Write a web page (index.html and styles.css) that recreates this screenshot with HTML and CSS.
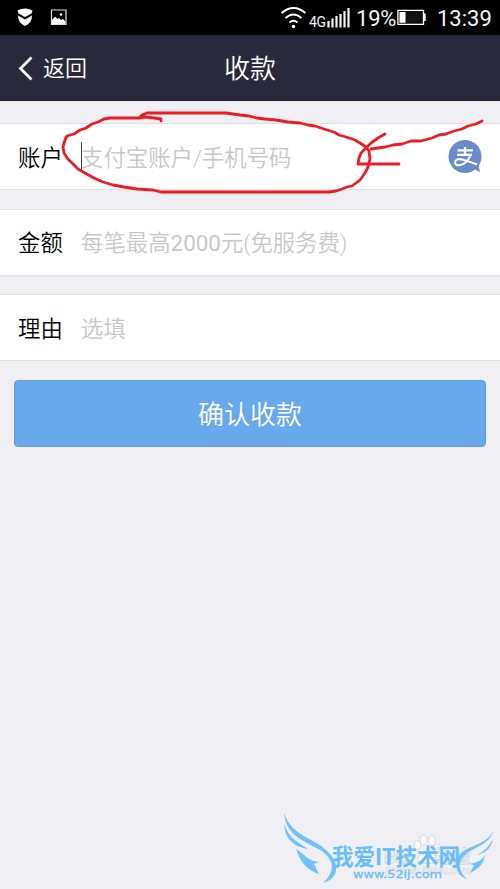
FILE: index.html
```html
<!DOCTYPE html>
<html lang="zh-CN">
<head>
<meta charset="utf-8">
<title>收款</title>
<link rel="stylesheet" href="styles.css">
</head>
<body>
<div class="screen">
  <div class="status">
    <svg class="status-left" width="80" height="35" viewBox="0 0 80 35" fill="#fff">
      <path d="M17.500 10.500Q25 6.500 32.500 10.500L31.500 13.500L25 17L18.500 13.500Z"/>
      <path d="M18 15.500L25 19.500L32 15.500Q32 23 25 26Q18 23 18 15.500Z"/>
      <path d="M51.500 10H66V24.500H51.500Z" fill="none" stroke="#ddd" stroke-width="1.200"/>
      <path d="M52 24V20L55 16.500L57.500 19L59 18L61 20L63 19L65.500 21.500V24Z"/>
      <circle cx="61" cy="14.500" r="1.200"/>
    </svg>
    <div class="status-right">
      <svg class="wifi" width="27" height="24" viewBox="0 0 27 24" fill="none" stroke="#fff" stroke-width="2">
        <path d="M1.500 7Q13.500-3 25.500 7M5.500 12Q13.500 5 21.500 12M9.500 16.500Q13.500 13 17.500 16.500"/>
        <circle cx="13.500" cy="20.500" r="1.700" fill="#fff" stroke="none"/>
      </svg>
      <span class="net">4G</span>
      <svg class="bars" width="24" height="20" viewBox="0 0 24 20" stroke="#f4f4f4" stroke-width="2.200">
        <path d="M1.500 13V19.500M5.500 10.500V19.500M9.500 8V19.500M13.500 6V19.500M17.500 3V19.500M21.500 0V19.500"/>
      </svg>
      <span class="percent">19%</span>
      <svg class="battery" width="30" height="17" viewBox="0 0 30 17">
        <path d="M.9 1.400H26.500V15.300H.9Z" fill="#111" stroke="#fff" stroke-width="1.300"/>
        <path d="M2.500 3H8.500V13.800H2.500ZM27 4.500H28.700V12H27Z" fill="#fff"/>
      </svg>
      <span class="clock">13:39</span>
    </div>
  </div>
  <header class="header">
    <div class="back">
      <svg width="16" height="26" viewBox="0 0 16 26" fill="none" stroke="#fff" stroke-width="2.800"><path d="M13.500 1.500L2.500 12.500L13.500 23.500"/></svg>
      <span>返回</span>
    </div>
    <h1 class="title">收款</h1>
  </header>
  <main class="form">
    <div class="row">
      <span class="label">账户</span><span class="caret"></span><span class="hint">支付宝账户/手机号码</span>
      <svg class="alipay" width="34" height="34" viewBox="0 0 34 34">
        <circle cx="17" cy="16.500" r="16.500" fill="#698bc9"/>
        <path d="M24 28L32 32L30 22Z" fill="#698bc9"/>
        <path d="M9.500 10.300H25M9 14.800H24M17 7V14.500M22.500 15Q20 22 14 24.500Q8 26.500 7 23Q7 18 14 19.500Q20 21 29 24.500" fill="none" stroke="#fff" stroke-width="2.200"/>
      </svg>
    </div>
    <div class="row"><span class="label">金额</span><span class="hint">每笔最高<span class="digits">2000</span>元(免服务费)</span></div>
    <div class="row"><span class="label">理由</span><span class="hint">选填</span></div>
    <button class="submit">确认收款</button>
  </main>

  <svg class="marks" width="500" height="889" viewBox="0 0 500 889">
    <g fill="none" stroke="#ed1c24" stroke-width="2.800" stroke-linecap="round" stroke-linejoin="round">
      <path d="M161 121V119L154 118L145 117L139 118H110L104 119L98 122L92 124L86 128L80 130L74 134L67 136L65 140L63 147L64 153L68 159L73 164L78 169L85 173L94 178L103 182L113 185L124 187L137 189L153 190L161 192H329L336 191L342 189L347 187L352 186L360 180L365 173L368 167L370 159L369 151L366 147L360 143L355 140L346 137L339 135L334 132L324 129L315 126L308 125L300 123L288 122L276 120L265 119L257 118L249 116L240 115L226 113H147L142 115L140 117"/>
      <path d="M482 121L476 124L468 126L462 129L454 131L446 134L439 135L432 138L421 141L411 141L402 144L393 145L385 147L378 148L371 149"/>
      <path d="M385 134L378 138L371 143L366 148L361 153L359 158L358 164H399"/>
    </g>
    <g class="baidu" fill="#fcfcfd">
      <g stroke="#cfcfd5" stroke-width=".9">
        <ellipse cx="417.500" cy="845" rx="3.300" ry="4.300"/><ellipse cx="423.500" cy="840" rx="3.400" ry="5"/><ellipse cx="432" cy="840.500" rx="3.500" ry="5"/><ellipse cx="437.500" cy="848" rx="3.300" ry="4"/>
        <path d="M428 848Q433 852 437 857Q439 865 428 863Q416 865 418 857Q422 852 428 848Z"/>
      </g>
      <text x="384" y="863" class="baidu-name">Bai</text><text x="434" y="863" class="baidu-name">经验</text>
      <text x="386" y="874" class="baidu-url" textLength="85" lengthAdjust="spacingAndGlyphs">jingyan.baidu.com</text>
    </g>
    <g fill="#70c3fa">
      <path d="M284 813C292 836 312 837 326 850C342 864 338 879 323 883C335 872 335 861 322 851C307 842 286 837 284 813Z"/>
      <path d="M284.500 824C288 838 298 842 308 849C294 847 284 838 284.500 824Z"/>
      <path d="M296 849C305 854 307 861 319 862L314 864L319 874C306 870 300 861 296 849Z"/>
      <path d="M494 830C488 846 476 846 466 854C457 861 458 871 467 879C454 875 454 860 461 853C472 844 486 845 494 830Z"/>
      <path d="M493 839C491 850 484 853 477 855C484 851 489 847 493 839Z"/>
      <path d="M485 855C482 860 479 862 469 864L474 865L470 873C478 869 484 864 485 855Z"/>
    </g>
    <g fill="#68bef9">
      <text x="332" y="865" class="site-name" textLength="128" lengthAdjust="spacingAndGlyphs">我爱IT技术网</text>
      <text x="353" y="878" class="site-url" textLength="89" lengthAdjust="spacingAndGlyphs">www.52ij.com</text>
    </g>
  </svg>
</div>
</body>
</html>
```
FILE: styles.css
```css
* { box-sizing: border-box; }
body {
  margin: 0;
  font-family: Roboto, "Noto Sans CJK SC", sans-serif;
}
.screen {
  position: relative;
  width: 500px;
  height: 889px;
  overflow: hidden;
  background: #efeff4;
}
.status {
  display: flex;
  justify-content: space-between;
  height: 35px;
  background: #000;
  color: #f4f4f4;
}
.status-right {
  display: flex;
  align-items: flex-start;
  width: 220px;
}
.wifi { margin-top: 6px; }
.net {
  width: 17px;
  margin: 13px 0 0 2px;
  font-size: 14px;
  line-height: 18px;
  letter-spacing: -.4px;
}
.bars { margin: 8px 0 0 1px; }
.percent {
  width: 41px;
  margin: 5px 0 0 5px;
  font-size: 22px;
  line-height: 28px;
  letter-spacing: -.2px;
}
.battery { margin-top: 9px; }
.clock {
  margin: 5px 0 0 10px;
  font-size: 22px;
  line-height: 28px;
}
.header {
  display: grid;
  grid-template-columns: 1fr auto 1fr;
  align-items: center;
  height: 66px;
  border-bottom: 1px solid #202131;
  background: #282a3c;
  color: #fff;
  font-weight: 350;
}
.back {
  display: flex;
  align-items: center;
  gap: 9px;
  padding: 3px 0 0 18px;
  font-size: 22px;
  line-height: 30px;
}
.title {
  margin: 0;
  padding-top: 2px;
  font-size: 26px;
  font-weight: 350;
  line-height: 36px;
}
.form {
  display: flex;
  flex-direction: column;
  gap: 18.500px;
  padding-top: 22px;
}
.row {
  display: flex;
  align-items: center;
  height: 67px;
  padding: 0 18px;
  border: solid #e0e0e3;
  border-width: 1px 0;
  background: #fff;
  font-size: 22.400px;
}
.label,
.hint {
  padding-bottom: 2px;
}
.label {
  width: 63px;
  color: #000;
  font-weight: 350;
}
.caret {
  width: 1px;
  height: 29px;
  margin: 0 -1px 1px 0;
  background: #444;
}
.hint {
  color: #c8c8c8;
  font-weight: 350;
}
.digits {
  font-weight: 400;
}
.alipay { margin: 0 0 0 auto; }
.submit {
  height: 67px;
  margin: 0 14px;
  padding: 3px 0 0;
  border: 1px solid #5f9fe0;
  border-radius: 4px;
  background: #68a9ec;
  color: #fff;
  font: 350 26px/36px Roboto, "Noto Sans CJK SC", sans-serif;
}
.marks {
  position: absolute;
  left: 0;
  top: 0;
}
.baidu { opacity: .85; }
.baidu-name {
  font: 700 18px Roboto, "Noto Sans CJK SC", sans-serif;
  stroke: #ceced4;
  stroke-width: .8px;
}
.baidu-url {
  font: 500 11px Roboto, "Noto Sans", sans-serif;
  stroke: #d4d4da;
  stroke-width: .5px;
}
.site-name { font: 700 23px "Noto Sans CJK SC", sans-serif; }
.site-url { font: 400 11px "DejaVu Sans", sans-serif; stroke: #68bef9; stroke-width: .3px; }
```
